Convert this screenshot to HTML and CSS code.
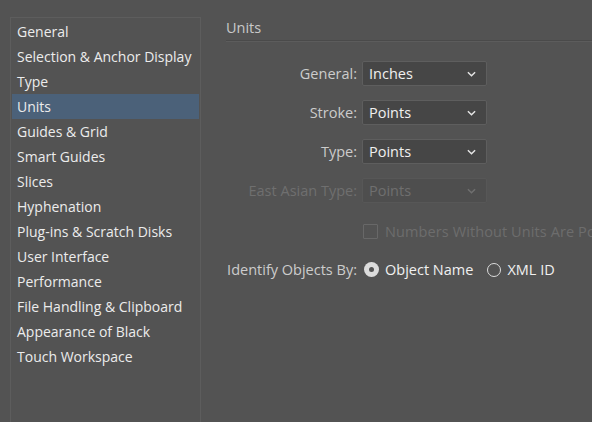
FILE: index.html
```html
<!DOCTYPE html>
<html>
<head>
<meta charset="utf-8">
<link rel="stylesheet" href="styles.css">
</head>
<body>
<div class="dialog">
  <ul class="nav">
    <li>General</li>
    <li>Selection &amp; Anchor Display</li>
    <li>Type</li>
    <li class="selected">Units</li>
    <li>Guides &amp; Grid</li>
    <li>Smart Guides</li>
    <li>Slices</li>
    <li>Hyphenation</li>
    <li>Plug-ins &amp; Scratch Disks</li>
    <li>User Interface</li>
    <li>Performance</li>
    <li>File Handling &amp; Clipboard</li>
    <li>Appearance of Black</li>
    <li>Touch Workspace</li>
  </ul>
  <div class="content">
    <div class="title">Units</div>
    <div class="form">
      <div class="row">
        <span class="label">General:</span>
        <div class="select"><span>Inches</span><svg class="chev" viewBox="0 0 10 6"><path d="M1 1l4 4 4-4"/></svg></div>
      </div>
      <div class="row">
        <span class="label">Stroke:</span>
        <div class="select"><span>Points</span><svg class="chev" viewBox="0 0 10 6"><path d="M1 1l4 4 4-4"/></svg></div>
      </div>
      <div class="row">
        <span class="label">Type:</span>
        <div class="select"><span>Points</span><svg class="chev" viewBox="0 0 10 6"><path d="M1 1l4 4 4-4"/></svg></div>
      </div>
      <div class="row disabled">
        <span class="label">East Asian Type:</span>
        <div class="select"><span>Points</span><svg class="chev" viewBox="0 0 10 6"><path d="M1 1l4 4 4-4"/></svg></div>
      </div>
      <div class="row check-row disabled">
        <span class="label"></span>
        <span class="checkbox"></span>
        <span class="check-text">Numbers Without Units Are Points</span>
      </div>
      <div class="row radio-row">
        <span class="label">Identify Objects By:</span>
        <span class="radio on"></span><span class="radio-text">Object Name</span>
        <span class="radio"></span><span class="radio-text">XML ID</span>
      </div>
    </div>
  </div>
</div>
</body>
</html>
```

FILE: styles.css
```css
html, body {
  margin: 0;
  padding: 0;
  background: #535353;
  width: 592px;
  height: 422px;
  overflow: hidden;
  font-family: "Open Sans", "Noto Sans", sans-serif;
  font-size: 14px;
}
.dialog {
  display: flex;
  padding: 17px 0 0 10px;
  height: 405px;
}
.nav {
  list-style: none;
  margin: 0;
  padding: 1px 1px 0 1px;
  flex: none;
  border: 1px solid #5d5d5d;
  border-bottom: none;
  box-sizing: border-box;
  width: 191px;
  height: 420px;
}
.nav li {
  height: 25px;
  line-height: 25px;
  padding-left: 5px;
  color: #ececec;
  white-space: nowrap;
}
.nav li.selected {
  background: #4b6179;
}
.content {
  flex: 1;
  padding-left: 25px;
  min-width: 0;
  overflow: hidden;
  font-size: 14.5px;
}
.title {
  color: #c9c9c9;
  height: 23px;
  line-height: 22px;
  border-bottom: 1px solid #4a4a4a;
  box-shadow: 0 1px 0 #5c5c5c;
  white-space: nowrap;
}
.form {
  padding-top: 20px;
  display: flex;
  flex-direction: column;
}
.row {
  display: flex;
  align-items: center;
  height: 25px;
  margin-bottom: 14px;
  white-space: nowrap;
}
.row .label {
  flex: none;
  text-align: right;
  color: #cccccc;
  padding-right: 5px;
  box-sizing: border-box;
  width: 136px;
}
.select {
  width: 125px;
  height: 25px;
  box-sizing: border-box;
  background: #464646;
  border: 1px solid #5e5e5e;
  border-radius: 2px;
  display: flex;
  align-items: center;
  justify-content: space-between;
  padding: 0 10px 0 6px;
  color: #f0f0f0;
}
.chev {
  width: 9px;
  height: 6px;
  fill: none;
  stroke: #e6e6e6;
  stroke-width: 1.6;
}
.disabled .label { color: #6f6f6f; }
.disabled .select {
  background: #4e4e4e;
  border-color: #575757;
  color: #6f6f6f;
}
.disabled .chev { stroke: #6f6f6f; }
.check-row {
  margin-top: 2px;
  margin-bottom: 13px;
}
.checkbox {
  width: 13px;
  height: 13px;
  border: 1px solid #686868;
  border-radius: 1px;
  margin: 0 7px 0 1px;
  flex: none;
}
.check-text { color: #6d6d6d; letter-spacing: 0.1px; }
.radio {
  width: 12px;
  height: 12px;
  border: 1.5px solid #dcdcdc;
  border-radius: 50%;
  flex: none;
  margin: 0 6px 0 2px;
  position: relative;
}
.radio.on {
  background: #dcdcdc;
  box-sizing: border-box;
  width: 15px;
  height: 15px;
  border: none;
}
.radio.on::after {
  content: "";
  position: absolute;
  left: 5px;
  top: 5px;
  width: 5px;
  height: 5px;
  border-radius: 50%;
  background: #535353;
}
.radio-text {
  color: #f0f0f0;
  margin-right: 12px;
}
```
